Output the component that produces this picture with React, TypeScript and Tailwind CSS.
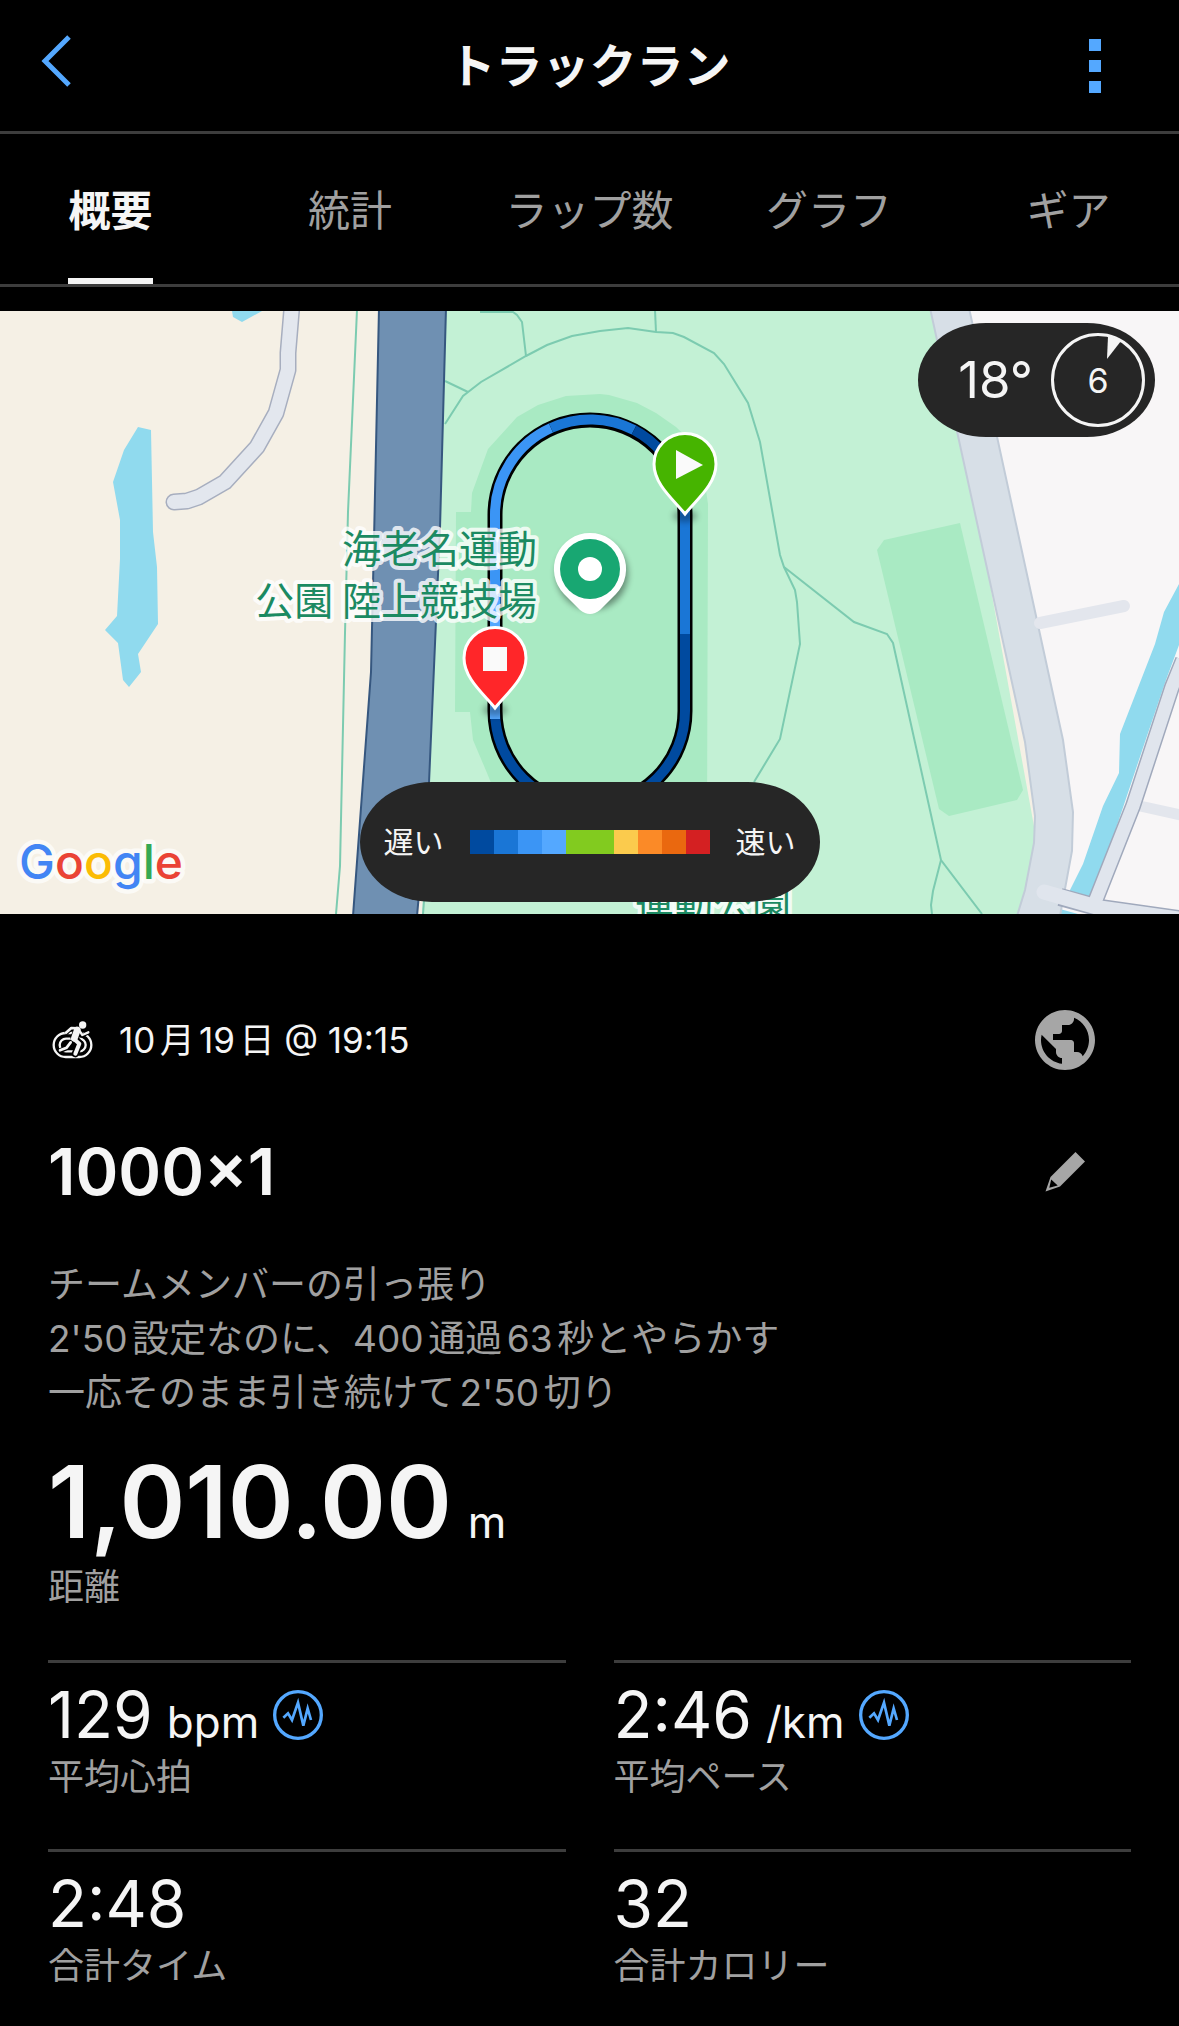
import { useState } from 'react'
import { MdPublic } from 'react-icons/md'

const tabs = ['概要', '統計', 'ラップ数', 'グラフ', 'ギア']

const legendColors = [
  'bg-[#004a9f]',
  'bg-[#1a76d6]',
  'bg-[#3b95f5]',
  'bg-[#54a8ff]',
  'bg-[#82cb1f]',
  'bg-[#82cb1f]',
  'bg-[#fbcb4d]',
  'bg-[#fb8a27]',
  'bg-[#ea680f]',
  'bg-[#d42022]',
]

const stats = [
  { value: '129', unit: 'bpm', label: '平均心拍', chart: true },
  { value: '2:46', unit: '/km', label: '平均ペース', chart: true },
  { value: '2:48', unit: '', label: '合計タイム', chart: false },
  { value: '32', unit: '', label: '合計カロリー', chart: false },
]

function Header() {
  return (
    <header className="grid grid-cols-[1fr_auto_1fr] items-center h-[134px] border-b-[3px] border-[#3d3d3d]">
      <button aria-label="戻る" className="justify-self-start ml-9 pb-2">
        <svg width="40" height="56" viewBox="0 0 40 56" fill="none" stroke="#54a8ff" strokeWidth="5">
          <path d="M33 3 L9 27 L33 51" />
        </svg>
      </button>
      <h1 className="text-[47px] leading-[72px] font-bold">トラックラン</h1>
      <button aria-label="メニュー" className="justify-self-end mr-[78px] flex flex-col gap-[9px]">
        <span className="size-3 bg-[#54a8ff]" />
        <span className="size-3 bg-[#54a8ff]" />
        <span className="size-3 bg-[#54a8ff]" />
      </button>
    </header>
  )
}

function Tabs() {
  const [active, setActive] = useState(0)

  return (
    <nav role="tablist" className="flex justify-between px-[68px] h-[153px] border-b-[3px] border-[#3d3d3d]">
      {tabs.map((tab, i) => (
        <button
          key={tab}
          role="tab"
          aria-selected={i === active}
          onClick={() => setActive(i)}
          className={`w-[85px] flex justify-center items-center whitespace-nowrap text-[42px] border-b-[6px] pt-2 ${
            i === active ? 'font-bold text-[#f5f5f5] border-[#f5f5f5]' : 'text-[#a0a0a0] border-transparent'
          }`}
        >
          {tab}
        </button>
      ))}
    </nav>
  )
}

function Pin({ x, y, color, children }: { x: number; y: number; color: string; children: React.ReactNode }) {
  return (
    <g transform={`translate(${x} ${y})`}>
      <ellipse cx="0" cy="2" rx="12" ry="6" fill="#000" opacity="0.3" filter="url(#soft)" />
      <path
        d="M0 0 C-10 -13 -31 -29 -31 -50 A31 30.5 0 0 1 31 -50 C31 -29 10 -13 0 0 Z"
        fill={color}
        stroke="#fff"
        strokeWidth="3"
      />
      {children}
    </g>
  )
}

function MapCanvas() {
  return (
    <svg
      className="block w-full h-full"
      viewBox="0 311 1179 603"
      preserveAspectRatio="xMidYMid slice"
      role="img"
      aria-label="ルートマップ"
    >
      <defs>
        <filter id="soft" x="-50%" y="-50%" width="200%" height="200%">
          <feGaussianBlur stdDeviation="3" />
        </filter>
      </defs>

      {/* land */}
      <rect x="0" y="311" width="1179" height="603" fill="#f5f0e5" />
      <path d="M446 310 L940 310 L1050 914 L422 914 L429 783 L440 528 Z" fill="#c3f1d5" />
      <path d="M950 310 H1179 V914 H1050 V790 Z" fill="#f8f6f7" />

      {/* water */}
      <g fill="#90daee">
        <path d="M138 427 L151 430 L153 532 L157 567 L158 624 L138 654 L141 672 L129 687 L123 680 L118 643 L105 630 L117 616 L120 559 L120 520 L113 482 L124 450 Z" />
        <path d="M232 311 L233 317 L242 322 L262 311 Z" />
        <path d="M1179 584 L1164 612 L1155 644 L1120 734 L1119 773 L1103 806 L1083 864 L1068 894 L1092 900 L1147 736 L1166 680 L1179 645 Z" />
        <path d="M1058 914 L1060 909 L1078 914 Z" />
      </g>

      {/* sports fields */}
      <g fill="#a9eac3">
        <path d="M600 394 L566 396 L538 405 L517 417 L488 449 L472 493 L471 512 L456 512 L455 712 L470 712 L473 740 L487 773 L510 830 L707 830 L708 504 L700 450 L676 427 L656 413 L637 403 L609 395 Z" />
        <path d="M877 550 L884 540 L960 523 L1023 790 L1017 800 L949 816 L939 809 Z" />
      </g>

      {/* footpaths */}
      <g fill="none" stroke="#7ccbb0" strokeWidth="2">
        <path d="M357 310 L348 512 L345 633 L340 866 L336 914" />
        <path d="M480 312 L513 312 L517 315 L522 322 L526 356" />
        <path d="M445 381 L468 392" />
        <path d="M445 424 L463 396 L481 382 L526 356 L547 345 L572 336 L600 331 L628 328 L656 332 L673 333 L684 337 L714 353 L724 364 L748 403 L760 442 L780 555 L784 567 L795 590 L797 602 L800 644 L780 739 L754 782" />
        <path d="M655 310 L656 332" />
        <path d="M784 567 L854 622 L887 634 L893 643 L941 860 L982 914" />
        <path d="M941 860 L933 891 L931 905 L932 914" />
        <path d="M424 901 L423 914" />
      </g>

      {/* expressway */}
      <path d="M379 308 L374 540 L371 672 L353 916 L417 916 L429 783 L440 528 L446 308 Z" fill="#6f90b2" stroke="#36577f" strokeWidth="2" />

      {/* streets */}
      <path d="M292 305 L288 353 L288 370 L276 413 L257 447 L225 482 L199 497 L187 501 L174 502" fill="none" stroke="#a7aebf" strokeWidth="17" strokeLinecap="round" strokeLinejoin="round" />
      <path d="M292 305 L288 353 L288 370 L276 413 L257 447 L225 482 L199 497 L187 501 L174 502" fill="none" stroke="#e3e7ee" strokeWidth="14" strokeLinecap="round" strokeLinejoin="round" />
      <path d="M930 308 L1025 742 L1035 816 L1034 843 L1025 890 L1017 916 L1060 916 L1072 851 L1073 812 L1063 740 L969 308 Z" fill="#d7dfe7" stroke="#c2ccd8" strokeWidth="2" />
      <path d="M1040 623 L1124 606" fill="none" stroke="#e3e6ed" strokeWidth="12" strokeLinecap="round" />
      <path d="M1140 806 L1185 816" fill="none" stroke="#e3e6ed" strokeWidth="11" />
      <path d="M1095 902 L1133 806 L1172 687 L1183 660" fill="none" stroke="#a0a9bc" strokeWidth="16" />
      <path d="M1060 897 L1100 908 L1179 919" fill="none" stroke="#a0a9bc" strokeWidth="18" />
      <path d="M1095 902 L1133 806 L1172 687 L1183 660" fill="none" stroke="#e0e5ed" strokeWidth="13" />
      <path d="M1044 892 L1100 908 L1179 919" fill="none" stroke="#e0e5ed" strokeWidth="15" strokeLinecap="round" />

      {/* recorded lap, coloured by pace */}
      <g fill="none">
        <path d="M685 515 V711 A95 95 0 0 1 495 711 V515 A95 95 0 0 1 685 515" stroke="#000" strokeWidth="15" />
        <g strokeWidth="10">
          <path d="M685 500 V634" stroke="#1a76d6" />
          <path d="M685 634 V711 A95 95 0 0 1 495 711 V719" stroke="#004a9f" />
          <path d="M495 719 V600" stroke="#54a8ff" />
          <path d="M495 600 V515 A95 95 0 0 1 551 428" stroke="#3b95f5" />
          <path d="M551 428 A95 95 0 0 1 634 430" stroke="#1a76d6" />
          <path d="M634 430 A95 95 0 0 1 680 485" stroke="#004a9f" />
        </g>
      </g>

      {/* place labels */}
      <g
        className="font-['Noto_Sans_CJK_JP',sans-serif] text-[39px]"
        fill="#1b8a62"
        stroke="#ffffff"
        strokeOpacity="0.8"
        strokeWidth="8"
        strokeLinejoin="round"
        paintOrder="stroke"
        textAnchor="end"
      >
        <text x="537" y="563">海老名運動</text>
        <text x="537" y="615">公園 陸上競技場</text>
        <text x="791" y="919">運動公園</text>
      </g>

      {/* place marker */}
      <circle cx="592" cy="574" r="36" fill="#000" opacity="0.4" filter="url(#soft)" />
      <path
        d="M590 533 A36 36 0 0 1 616 594 L600 610 Q590 618 580 610 L564 594 A36 36 0 0 1 590 533 Z"
        fill="#fff"
      />
      <circle cx="590" cy="569" r="30" fill="#18a772" />
      <circle cx="590" cy="569" r="12" fill="#fff" />

      <Pin x={685} y={514} color="#46b400">
        <path d="M-9 -64 L18 -49 L-9 -35 Z" fill="#fafafa" />
      </Pin>
      <Pin x={495} y={708} color="#ff2629">
        <rect x="-12" y="-61" width="24" height="24" fill="#fafafa" />
      </Pin>

      <text
        x="19"
        y="879"
        className="font-['Inter',sans-serif] text-[48px] font-medium"
        stroke="#ffffff"
        strokeOpacity="0.7"
        strokeWidth="9"
        strokeLinejoin="round"
        paintOrder="stroke"
      >
        <tspan fill="#4285f4">G</tspan>
        <tspan fill="#ea4335">o</tspan>
        <tspan fill="#fbbc05">o</tspan>
        <tspan fill="#4285f4">g</tspan>
        <tspan fill="#34a853">l</tspan>
        <tspan fill="#ea4335">e</tspan>
      </text>
    </svg>
  )
}

function WeatherBadge() {
  return (
    <div className="absolute top-3 right-6 h-[114px] flex items-center gap-[18px] pl-10 pr-[10px] rounded-[68px/57px] bg-[#262626]">
      <span className="text-[51px]">18°</span>
      <div className="relative size-[94px] flex items-center justify-center">
        <svg className="absolute inset-0" viewBox="0 0 94 94">
          <circle cx="47" cy="47" r="45.5" fill="none" stroke="#f5f5f5" strokeWidth="3" />
          <path d="M57 3 L70 8 L56 26 Z" fill="#f5f5f5" />
        </svg>
        <span className="text-[34px]">6</span>
      </div>
    </div>
  )
}

function PaceLegend() {
  return (
    <div className="absolute bottom-3 left-1/2 -translate-x-1/2 h-[120px] flex items-center gap-[26px] px-6 rounded-[72px/60px] bg-[#262626] whitespace-nowrap text-[30px]">
      <span>遅い</span>
      <div className="flex">
        {legendColors.map((color, i) => (
          <span key={i} className={`w-6 h-6 ${color}`} />
        ))}
      </div>
      <span>速い</span>
    </div>
  )
}

function TrackRunIcon() {
  return (
    <svg width="41" height="38" viewBox="0 0 123 114" fill="none" stroke="#f5f5f5">
      <rect x="5" y="36" width="113" height="72" rx="36" strokeWidth="7" />
      <rect x="23" y="53" width="78" height="38" rx="19" strokeWidth="7" />
      <g stroke="#000" strokeLinecap="round" strokeLinejoin="round">
        <path d="M76 26 L66 50 L83 68 L70 98" strokeWidth="22" />
        <path d="M54 66 L44 80 L24 89" strokeWidth="15" />
        <path d="M58 22 L44 35 M84 34 L92 43 L108 35" strokeWidth="12" />
      </g>
      <circle cx="92" cy="12" r="11" fill="#f5f5f5" stroke="none" />
      <g strokeLinecap="round" strokeLinejoin="round">
        <path d="M76 27 L67 52" strokeWidth="20" />
        <path d="M66 54 L82 68 L70 98" strokeWidth="12" />
        <path d="M56 64 L44 80 L24 88" strokeWidth="8" />
        <path d="M76 22 L58 21 L42 35" strokeWidth="8" />
        <path d="M80 26 L91 42 L109 34" strokeWidth="7" />
      </g>
    </svg>
  )
}

function PencilIcon() {
  return (
    <svg width="40" height="40" viewBox="0 0 40 40" fill="#a6a6a6">
      <path fillRule="evenodd" d="M30.5 0 L40 9.5 L15 34.5 L0.5 39.5 L5.5 25 Z M6.2 27.5 L4.3 35.7 L12.7 33.5 Z" />
    </svg>
  )
}

function ChartButton({ label }: { label: string }) {
  return (
    <button aria-label={`${label}のグラフ`} className="self-center">
      <svg width="50" height="50" viewBox="0 0 150 150" fill="none" stroke="#54a8ff">
        <circle cx="75" cy="75" r="70" strokeWidth="10" />
        <path d="M31 83 L45 70 L57 90 L75 38 L91 107 L104 55 L114 90" strokeWidth="8" />
      </svg>
    </button>
  )
}

export default function App() {
  return (
    <div
      lang="ja"
      className="min-h-screen bg-black text-[#f5f5f5] font-['Inter','Noto_Sans_CJK_JP',sans-serif]"
    >
      <Header />
      <Tabs />

      <section className="relative mt-6 h-[603px] overflow-hidden">
        <MapCanvas />
        <WeatherBadge />
        <PaceLegend />
      </section>

      <main className="px-12 pt-24">
        <div className="flex items-center justify-between pr-[30px]">
          <div className="flex items-center gap-[26px] pl-1">
            <TrackRunIcon />
            <time className="text-[35px] leading-[60px] [text-autospace:normal]">10月19日 @ 19:15</time>
          </div>
          <button aria-label="公開設定" className="-my-2">
            <MdPublic size={72} color="#a6a6a6" />
          </button>
        </div>

        <div className="flex items-center justify-between mt-16 pr-[46px]">
          <h2 className="text-[65px] leading-[76px] font-semibold">1000×1</h2>
          <button aria-label="編集">
            <PencilIcon />
          </button>
        </div>

        <p className="mt-12 text-[37px] leading-[54px] text-[#a0a0a0] [text-autospace:normal]">
          チームメンバーの引っ張り
          <br />
          2'50設定なのに、400通過63秒とやらかす
          <br />
          一応そのまま引き続けて2'50切り
        </p>

        <div className="mt-[22px] flex items-baseline gap-4">
          <span className="text-[100px] leading-[120px] font-semibold">1,010.00</span>
          <span className="text-[44px] leading-none">m</span>
        </div>
        <p className="text-[36px] leading-[50px] text-[#a0a0a0]">距離</p>

        <div className="mt-12 grid grid-cols-2 gap-x-12">
          {stats.map((stat) => (
            <div key={stat.label} className="border-t-[3px] border-[#3d3d3d] pt-4 pb-[46px]">
              <div className="flex items-baseline gap-[14px]">
                <span className="text-[64px] leading-[72px]">{stat.value}</span>
                {stat.unit && <span className="text-[44px] leading-none">{stat.unit}</span>}
                {stat.chart && <ChartButton label={stat.label} />}
              </div>
              <p className="text-[36px] leading-[52px] text-[#a0a0a0]">{stat.label}</p>
            </div>
          ))}
        </div>
      </main>
    </div>
  )
}
